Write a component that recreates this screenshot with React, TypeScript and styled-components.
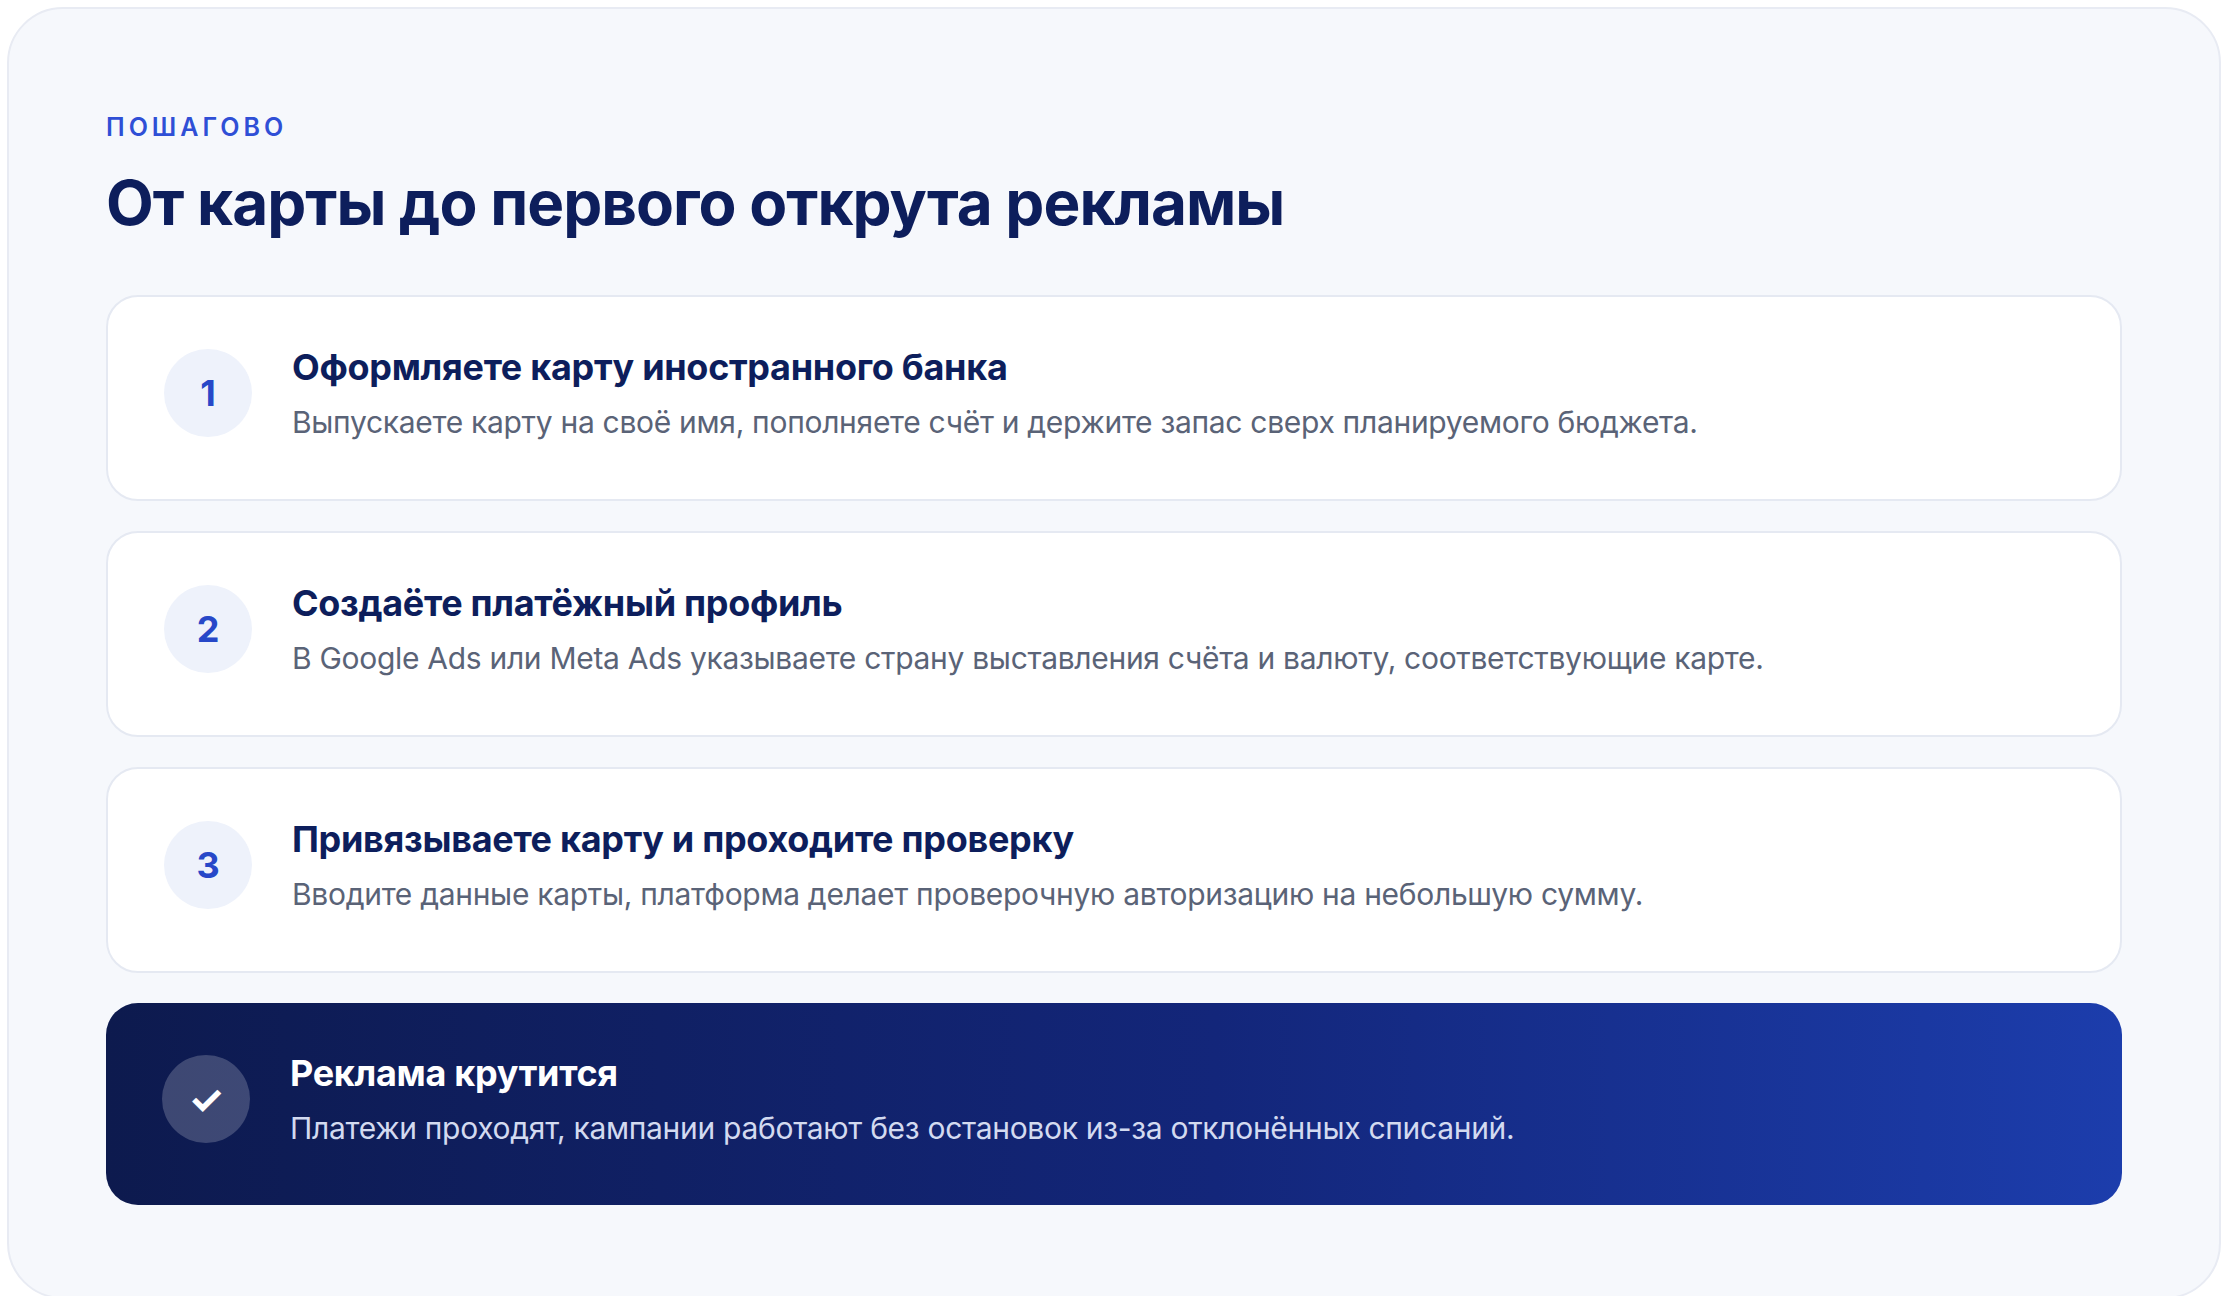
import React from 'react';
import styled, { createGlobalStyle } from 'styled-components';

const GlobalStyle = createGlobalStyle`
  body {
    margin: 0;
    background: #ffffff;
    font-family: Inter, "Noto Sans", sans-serif;
  }
`;

type Step = {
  mark: string;
  title: string;
  text: string;
  final?: boolean;
};

const steps: Step[] = [
  {
    mark: '1',
    title: 'Оформляете карту иностранного банка',
    text: 'Выпускаете карту на своё имя, пополняете счёт и держите запас сверх планируемого бюджета.',
  },
  {
    mark: '2',
    title: 'Создаёте платёжный профиль',
    text: 'В Google Ads или Meta Ads указываете страну выставления счёта и валюту, соответствующие карте.',
  },
  {
    mark: '3',
    title: 'Привязываете карту и проходите проверку',
    text: 'Вводите данные карты, платформа делает проверочную авторизацию на небольшую сумму.',
  },
  {
    mark: '✓',
    title: 'Реклама крутится',
    text: 'Платежи проходят, кампании работают без остановок из-за отклонённых списаний.',
    final: true,
  },
];

const App: React.FC = () => {
  return (
    <Page>
      <GlobalStyle />
      <Section>
        <Eyebrow>Пошагово</Eyebrow>
        <Heading>От карты до первого открута рекламы</Heading>
        <StepList>
          {steps.map((s) => (
            <StepCard key={s.mark} $final={s.final}>
              <Badge $final={s.final}>{s.mark}</Badge>
              <StepBody>
                <StepTitle $final={s.final}>{s.title}</StepTitle>
                <StepText $final={s.final}>{s.text}</StepText>
              </StepBody>
            </StepCard>
          ))}
        </StepList>
      </Section>
    </Page>
  );
};

// スタイリング
const Page = styled.div`
  padding: 7px;
`;

const Section = styled.section`
  width: 2214px;
  box-sizing: border-box;
  background: #f6f8fc;
  border: 2px solid #e8ebf3;
  border-radius: 56px;
  padding: 98px 97px 92px;
`;

const Eyebrow = styled.div`
  color: #2f4fd6;
  font-size: 25px;
  font-weight: 600;
  letter-spacing: 4px;
  text-transform: uppercase;
  line-height: 40px;
`;

const Heading = styled.h1`
  margin: 18px 0 54px;
  color: #0d1e5c;
  font-size: 62px;
  font-weight: 700;
  letter-spacing: -1px;
  line-height: 76px;
`;

const StepList = styled.div`
  display: flex;
  flex-direction: column;
  gap: 30px;
`;

const StepCard = styled.div<{ $final?: boolean }>`
  display: flex;
  align-items: center;
  gap: 40px;
  height: ${(p) => (p.$final ? '202px' : '206px')};
  box-sizing: border-box;
  padding: 0 56px;
  border-radius: 32px;
  border: ${(p) => (p.$final ? 'none' : '2px solid #e5e9f2')};
  background: ${(p) =>
    p.$final ? 'linear-gradient(90deg, #0d1a4e 0%, #13267a 55%, #1c3dac 100%)' : '#ffffff'};
`;

const Badge = styled.div<{ $final?: boolean }>`
  flex: none;
  width: 88px;
  height: 88px;
  border-radius: 50%;
  display: flex;
  align-items: center;
  justify-content: center;
  margin-top: -10px;
  background: ${(p) => (p.$final ? 'rgba(255,255,255,0.2)' : '#eef2fb')};
  color: ${(p) => (p.$final ? '#ffffff' : '#2748c8')};
  font-size: ${(p) => (p.$final ? '40px' : '36px')};
  font-weight: 700;
`;

const StepBody = styled.div`
  display: flex;
  flex-direction: column;
  gap: 10px;
  margin-top: -10px;
`;

const StepTitle = styled.div<{ $final?: boolean }>`
  color: ${(p) => (p.$final ? '#ffffff' : '#0d1e5c')};
  font-size: 36px;
  font-weight: 700;
  letter-spacing: -0.3px;
  line-height: 48px;
`;

const StepText = styled.div<{ $final?: boolean }>`
  color: ${(p) => (p.$final ? '#d3daf0' : '#5a6377')};
  font-size: 30px;
  line-height: 42px;
  letter-spacing: -0.3px;
`;

export default App;
